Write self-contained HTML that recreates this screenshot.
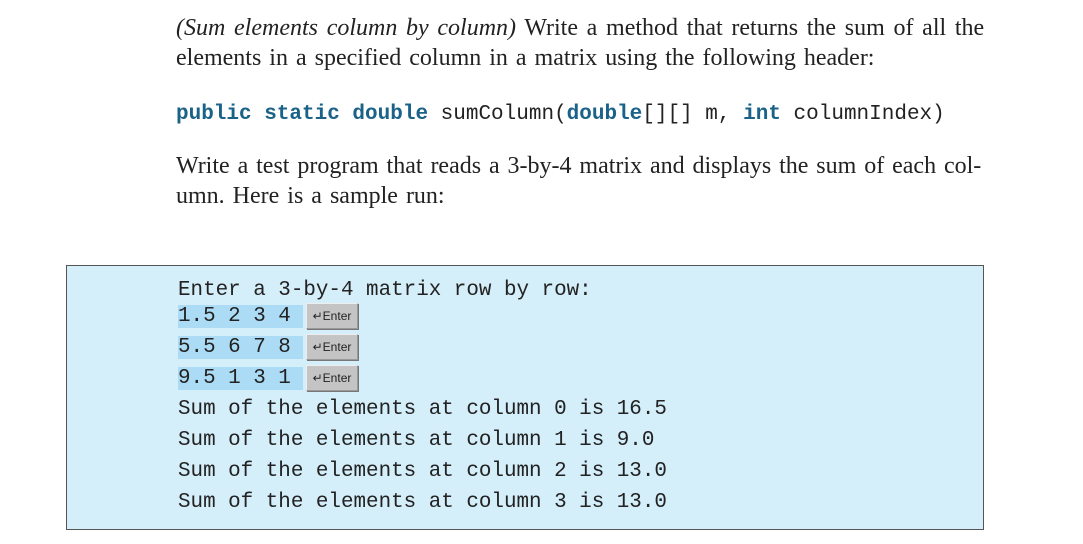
<!DOCTYPE html>
<html><head><meta charset="utf-8"><style>
body{margin:0;width:1083px;height:544px;background:#fff;position:relative;overflow:hidden}
.s{position:absolute;left:176px;font-family:"Liberation Serif",serif;font-size:24px;word-spacing:2px;color:#222;white-space:nowrap}
.m{position:absolute;font-family:"Liberation Mono",monospace;font-size:20.9px;color:#222;white-space:pre}
.k{color:#1b6288;font-weight:bold}
.box{position:absolute;left:66px;top:265px;width:916px;height:263px;background:#d4eefa;border:1px solid #555}
.hl{background:#acdcf5}
.ent{position:absolute;left:306px;width:50px;height:24px;background:#c4c4c4;border:1px solid #999;border-top-color:#eee;border-left-color:#eee;font-family:"Liberation Sans",sans-serif;font-size:12px;line-height:24px;text-align:center;color:#222;box-shadow:1px 1px 0 #777}
</style></head><body>
<div class="s" style="top:15px;word-spacing:2.7px"><i>(Sum elements column by column)</i> Write a method that returns the sum of all the</div>
<div class="s" style="top:45px">elements in a specified column in a matrix using the following header:</div>
<div class="m" style="left:176px;top:103px;font-size:21px"><span class="k">public static double</span> sumColumn(<span class="k">double</span>[][] m, <span class="k">int</span> columnIndex)</div>
<div class="s" style="top:153px;word-spacing:1.9px">Write a test program that reads a 3-by-4 matrix and displays the sum of each col-</div>
<div class="s" style="top:183px">umn. Here is a sample run:</div>
<div class="box"></div>
<div class="m" style="left:178px;top:279px">Enter a 3-by-4 matrix row by row:</div>
<div class="m" style="left:178px;top:305px"><span class="hl">1.5 2 3 4 </span></div>
<div class="m" style="left:178px;top:336px"><span class="hl">5.5 6 7 8 </span></div>
<div class="m" style="left:178px;top:367px"><span class="hl">9.5 1 3 1 </span></div>
<div class="ent" style="top:303px">↵Enter</div>
<div class="ent" style="top:334px">↵Enter</div>
<div class="ent" style="top:365px">↵Enter</div>
<div class="m" style="left:178px;top:398px">Sum of the elements at column 0 is 16.5</div>
<div class="m" style="left:178px;top:429px">Sum of the elements at column 1 is 9.0</div>
<div class="m" style="left:178px;top:460px">Sum of the elements at column 2 is 13.0</div>
<div class="m" style="left:178px;top:491px">Sum of the elements at column 3 is 13.0</div>
</body></html>
